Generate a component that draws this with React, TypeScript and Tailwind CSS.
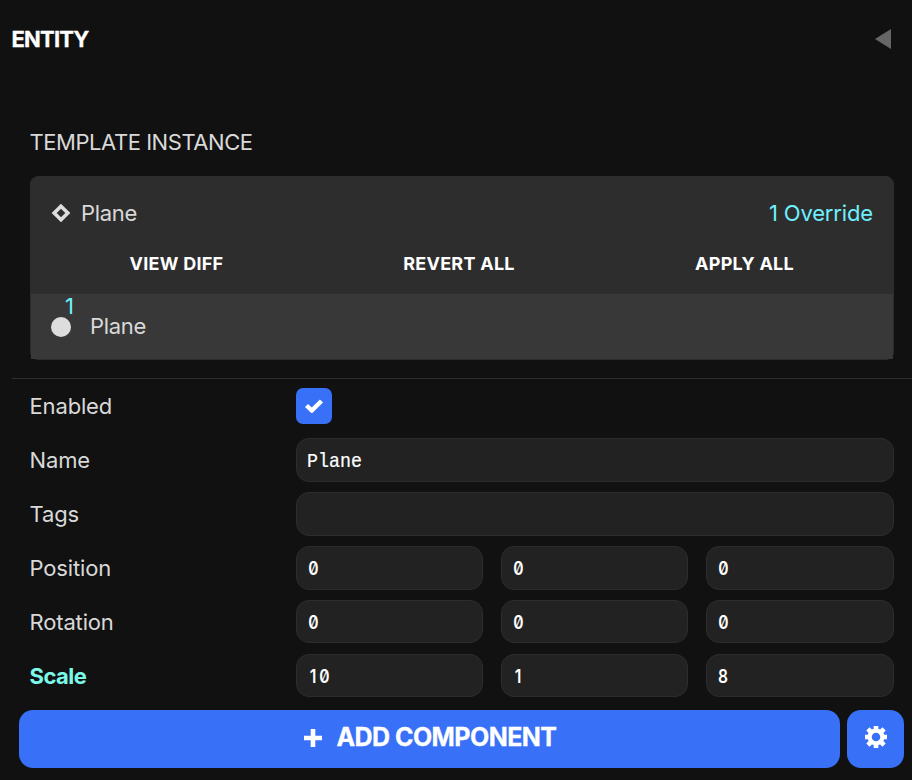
import React from "react";

type FieldProps = { value?: string; className?: string };

function Glyphs({ value }: { value: string }) {
  const numeric = /^[0-9]+$/.test(value);
  return numeric ? (
    <span className="flex pt-[2px] font-['Inter',sans-serif] text-[19px] leading-[26px] font-semibold [font-feature-settings:'zero'_1]">
      {value.split("").map((c, i) => (
        <span key={i} className="flex w-[11px] justify-center">
          <span className="inline-block scale-x-[0.82]">{c}</span>
        </span>
      ))}
    </span>
  ) : (
    <span className="mt-[6px] -ml-[0.5px] inline-block origin-bottom-left scale-y-[1.12] font-['Liberation_Mono',monospace] text-[18.3px] leading-[22px] [-webkit-text-stroke:0.2px_white]">
      {value}
    </span>
  );
}

function Field({ value, className = "h-[44px]" }: FieldProps) {
  return (
    <div className={`flex min-w-0 flex-1 items-center rounded-[13px] border border-[#2d2d2d] bg-[#222222] pl-[10.5px] text-white ${className}`}>
      {value && <Glyphs value={value} />}
    </div>
  );
}

function Row({ label, children, active = false }: { label: string; children: React.ReactNode; active?: boolean }) {
  return (
    <div className="flex h-[54px] items-start pr-[18px] pl-[29.5px]">
      <div className={`w-[266.5px] shrink-0 leading-[44px] ${active ? "font-bold tracking-[-0.5px] text-[#7df9e9]" : "tracking-[-0.15px]"}`}>{label}</div>
      {children}
    </div>
  );
}

function Vector({ values, className }: { values: string[]; className?: string }) {
  return (
    <div className="grid flex-1 grid-cols-[187px_187px_188px] gap-[18px]">
      {values.map((v, i) => (
        <div key={i} className="flex"><Field value={v} className={className} /></div>
      ))}
    </div>
  );
}

export default function App() {
  return (
    <div className="flex h-[780px] w-[912px] flex-col overflow-hidden bg-[#111111] font-['Inter',sans-serif] text-[22px] text-[#d9d9d9]">
      <header className="flex h-[78px] items-center justify-between pr-[21px] pl-[11.5px]">
        <h1 className="font-bold tracking-[-0.8px] text-white [-webkit-text-stroke:0.3px_white]">ENTITY</h1>
        <svg width="16" height="20" viewBox="0 0 16 20"><path d="M16 0v20L0 10z" fill="#666" /></svg>
      </header>
      <h2 className="mt-[48px] h-[50px] pl-[29.5px] leading-[33px] tracking-[-0.45px]">TEMPLATE INSTANCE</h2>
      <section className="mr-[18px] ml-[30px] h-[184px] shrink-0 rounded-[8px] border border-[#2d2d2d] bg-[#2d2d2d]">
        <div className="flex h-[73px] items-center pr-[20px] pl-[20px]">
          <svg width="20" height="20" viewBox="0 0 20 20"><path d="M10 2.2 16.8 9 10 15.8 3.2 9z" fill="none" stroke="#ddd" strokeWidth="3.6" /></svg>
          <span className="ml-[10px] tracking-[-0.3px]">Plane</span>
          <span className="ml-auto tracking-[-0.15px] text-[#6ff0ff]">1 Override</span>
        </div>
        <div className="flex h-[44px] text-[18px] leading-[28px] font-bold tracking-[0.25px] text-white">
          <span className="w-[291px] text-center">VIEW DIFF</span>
          <span className="w-[274px] text-center">REVERT ALL</span>
          <span className="flex-1 text-center">APPLY ALL</span>
        </div>
        <div className="relative flex h-[65px] items-center bg-[#383838] pl-[20px]">
          <span className="size-[20px] rounded-full bg-[#ddd]" />
          <span className="absolute top-0 left-[34px] text-[22px] leading-[25px] text-[#6ff0ff]">1</span>
          <span className="ml-[19px] tracking-[-0.3px]">Plane</span>
        </div>
      </section>
      <div className="mt-[18px] ml-[12px] h-px shrink-0 bg-[#2d2d2d]" />
      <main className="mt-[5px] h-[326px] shrink-0">
        <Row label="Enabled">
          <div className="mt-[4px] flex size-[36px] items-center justify-center rounded-[7px] bg-[#3871f7]">
            <svg width="18" height="14" viewBox="0 0 18 14"><path d="m1.5 6.5 5.3 5L16.5 2" fill="none" stroke="white" strokeWidth="4.4" /></svg>
          </div>
        </Row>
        <Row label="Name"><Field value="Plane" /></Row>
        <Row label="Tags"><Field /></Row>
        <Row label="Position"><Vector values={["0", "0", "0"]} /></Row>
        <Row label="Rotation"><Vector values={["0", "0", "0"]} className="h-[43px]" /></Row>
        <Row label="Scale" active><Vector values={["10", "1", "8"]} className="h-[43px]" /></Row>
      </main>
      <footer className="flex h-[58px] shrink-0 gap-[7px] pr-[8px] pl-[19px]">
        <button className="flex flex-1 items-center justify-center rounded-[14px] bg-[#3871f7] pb-[2px] pl-[2px] text-[25px] font-bold tracking-[-0.55px] text-white">
          <svg className="mr-[14px]" width="18" height="18" viewBox="0 0 18 18"><path d="M9 0v18M0 9h18" stroke="white" strokeWidth="4.6" /></svg>
          <span className="[-webkit-text-stroke:0.3px_white]">ADD COMPONENT</span>
        </button>
        <button className="flex w-[57px] items-center justify-center rounded-[14px] bg-[#3871f7] pb-[4px]">
          <svg width="22" height="22" viewBox="-11 -11 22 22">
            <circle r="6.4" fill="none" stroke="white" strokeWidth="4.2" />
            <path d="M0-11V-7M0 11V7M-11 0h4M11 0H7M-8.1-8.1-5-5M8.1 8.1 5 5M-8.1 8.1-5 5M8.1-8.1 5-5" stroke="white" strokeWidth="4.6" />
          </svg>
        </button>
      </footer>
    </div>
  );
}
